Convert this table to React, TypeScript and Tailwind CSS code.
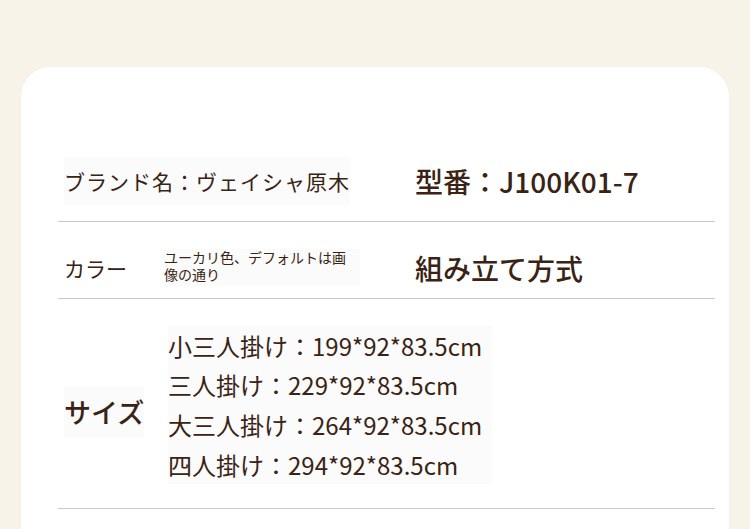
import React from "react";

const font = { fontFamily: '"Noto Sans CJK JP", "Noto Sans", sans-serif' };

export default function App() {
  return (
    <div className="w-[750px] h-[529px] overflow-hidden bg-[#f7f3e9]" style={font}>
      <div className="mx-[21px] mt-[67px] h-[600px] rounded-[30px] bg-white pt-[77px] text-[#3a2314]">
        <div className="ml-[37px] mr-[14px]">
          {/* Row 1 */}
          <div className="flex h-[78px] items-center border-b-[1.5px] border-[#c9c9c9] pb-[4px]">
            <div className="w-[357px] pl-[6px]">
              <span className="inline-block bg-[#fbfbfb] text-[21px] leading-[48px] tracking-[1px]">ブランド名：ヴェイシャ原木</span>
            </div>
            <div className="text-[28px] leading-[40px] font-medium">型番：J100K01-7</div>
          </div>
          {/* Row 2 */}
          <div className="flex h-[77px] items-center border-b-[1.5px] border-[#c9c9c9] pt-[15px]">
            <div className="flex w-[357px] items-center pl-[6px]">
              <span className="w-[100px] text-[21px] leading-[46px]">カラー</span>
              <span className="w-[196px] bg-[#fbfbfb] pb-[3px] text-[14px] leading-[17px]">
                ユーカリ色、デフォルトは画
                <br />
                像の通り
              </span>
            </div>
            <div className="text-[28px] leading-[40px] font-medium">組み立て方式</div>
          </div>
          {/* Row 3 */}
          <div className="flex h-[210px] items-center border-b-[1.5px] border-[#c9c9c9] pt-[3px]">
            <div className="w-[110px] pl-[6px] pt-[14px]">
              <span className="inline-block bg-[#fbfbfb] text-[27px] leading-[52px] font-medium">サイズ</span>
            </div>
            <div className="bg-[#fbfbfb] pr-[10px] text-[24px] leading-[39.7px]">
              <div>小三人掛け：199*92*83.5cm</div>
              <div>三人掛け：229*92*83.5cm</div>
              <div>大三人掛け：264*92*83.5cm</div>
              <div>四人掛け：294*92*83.5cm</div>
            </div>
          </div>
        </div>
      </div>
    </div>
  );
}
